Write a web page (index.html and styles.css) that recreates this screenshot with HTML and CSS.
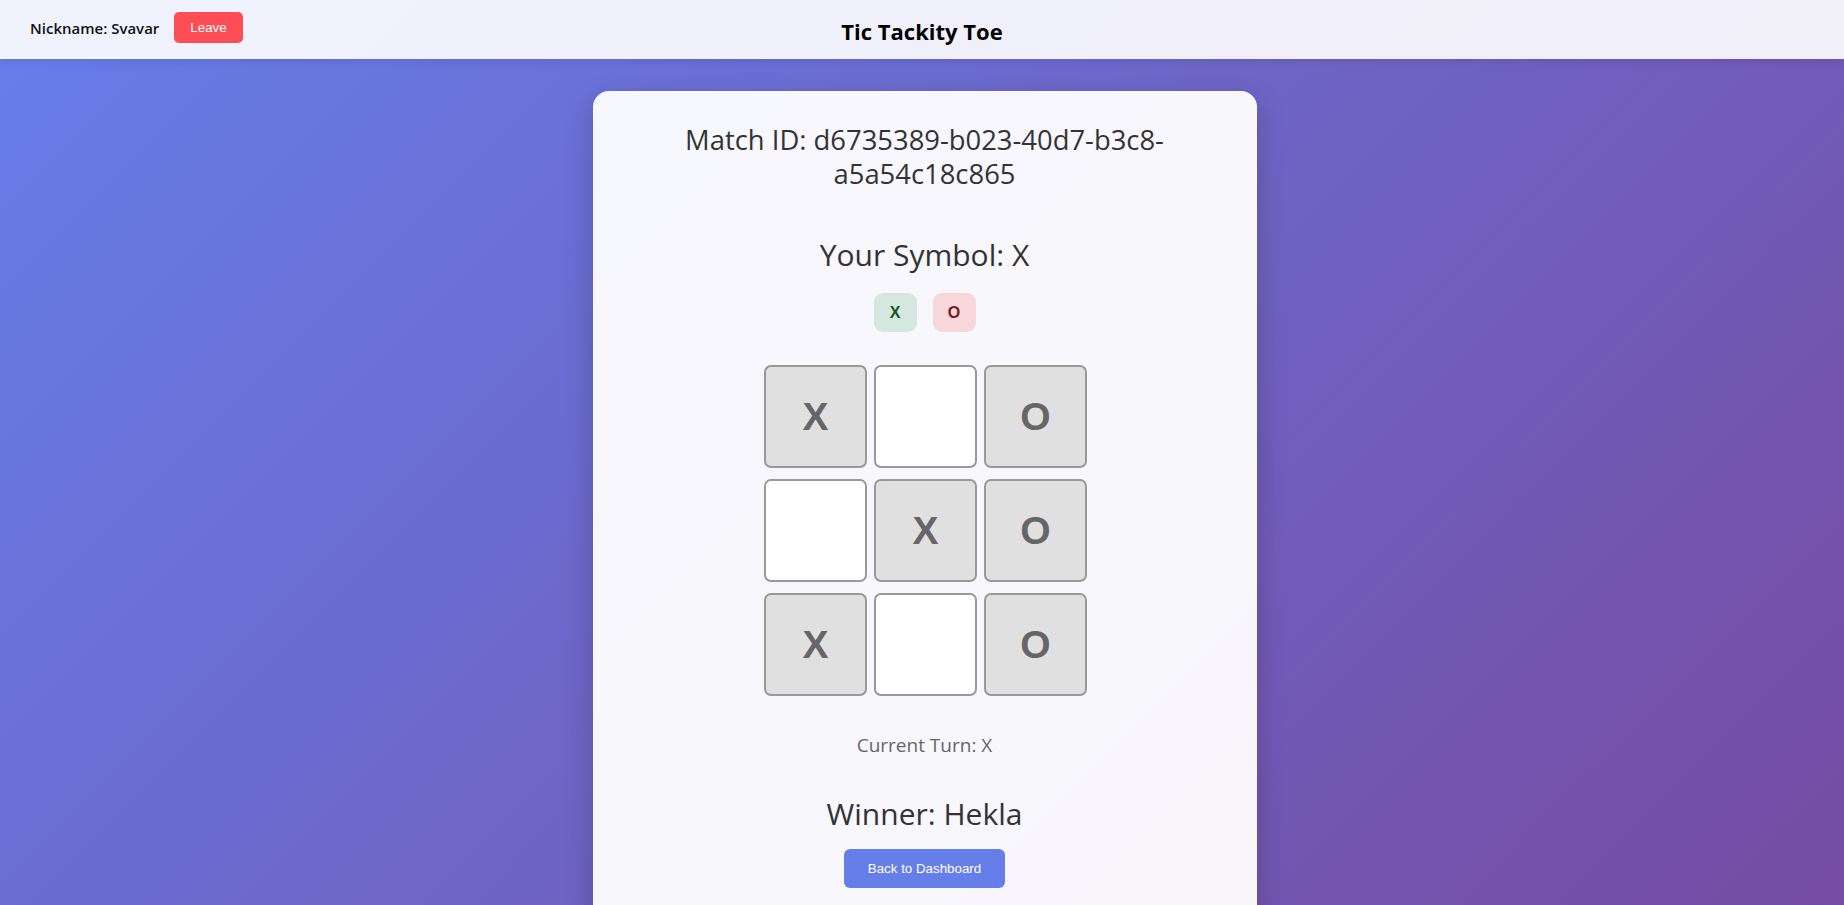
FILE: index.html
```html
<!DOCTYPE html>
<html lang="en">
<head>
<meta charset="utf-8">
<title>Tic Tackity Toe</title>
<link rel="stylesheet" href="styles.css">
</head>
<body>
<header class="topbar">
  <div class="user">
    <span class="nickname">Nickname: Svavar</span>
    <button class="btn-leave">Leave</button>
  </div>
  <h1 class="title">Tic Tackity Toe</h1>
  <div class="spacer"></div>
</header>
<main class="main">
  <section class="card">
    <h2 class="match-id">Match ID: d6735389-b023-40d7-b3c8-a5a54c18c865</h2>
    <h2 class="symbol">Your Symbol: X</h2>
    <div class="badges">
      <span class="badge badge-x">X</span>
      <span class="badge badge-o">O</span>
    </div>
    <div class="board">
      <button class="cell filled">X</button>
      <button class="cell"></button>
      <button class="cell filled">O</button>
      <button class="cell"></button>
      <button class="cell filled">X</button>
      <button class="cell filled">O</button>
      <button class="cell filled">X</button>
      <button class="cell"></button>
      <button class="cell filled">O</button>
    </div>
    <p class="turn">Current Turn: X</p>
    <h2 class="winner">Winner: Hekla</h2>
    <button class="btn-back">Back to Dashboard</button>
  </section>
</main>
</body>
</html>
```
FILE: styles.css
```css
html, body {
  margin: 0;
  padding: 0;
}
body {
  min-height: 100vh;
  font-family: "Open Sans", "Noto Sans", sans-serif;
  background: linear-gradient(135deg, #667eea 0%, #764ba2 100%);
  background-attachment: fixed;
  color: #333;
}
.topbar {
  display: grid;
  grid-template-columns: 1fr auto 1fr;
  align-items: center;
  height: 59px;
  box-sizing: border-box;
  padding: 0 30px;
  background: rgba(255, 255, 255, 0.9);
  box-shadow: 0 2px 10px rgba(0, 0, 0, 0.1);
}
.user {
  display: flex;
  align-items: center;
  gap: 15px;
  margin-top: -4px;
}
.nickname {
  font-size: 15px;
  font-weight: 600;
  color: #111;
}
.btn-leave {
  font-family: "Liberation Sans", Arial, sans-serif;
  font-size: 13.333px;
  background: #ff4d55;
  color: #fff;
  border: none;
  border-radius: 5px;
  padding: 8px 16px;
  height: 31px;
}
.title {
  margin: 3px 0 0;
  font-size: 22px;
  font-weight: 700;
  color: #000;
}
.main {
  padding: 32px 0 0 5px;
}
.card {
  width: 664px;
  box-sizing: border-box;
  margin: 0 auto;
  padding: 32px 32px 40px;
  border-radius: 16px;
  background: rgba(255, 255, 255, 0.95);
  box-shadow: 0 10px 30px rgba(0, 0, 0, 0.2);
  text-align: center;
}
.match-id {
  margin: 0 20px;
  font-size: 27.4px;
  font-weight: 400;
  line-height: 34px;
  color: #333;
}
.symbol {
  margin: 44px 0 0;
  font-size: 30px;
  font-weight: 400;
  line-height: 40px;
  color: #333;
}
.badges {
  display: flex;
  justify-content: center;
  gap: 16px;
  margin-top: 18px;
}
.badge {
  display: flex;
  align-items: center;
  justify-content: center;
  width: 43px;
  height: 39px;
  border-radius: 9px;
  font-family: "Liberation Sans", Arial, sans-serif;
  font-weight: 700;
  font-size: 16px;
}
.badge-x {
  background: #d4e8df;
  color: #155724;
}
.badge-o {
  background: #f8d7da;
  color: #721c24;
}
.board {
  display: grid;
  grid-template-columns: repeat(3, 103px);
  grid-auto-rows: 103px;
  column-gap: 7px;
  row-gap: 11px;
  justify-content: center;
  margin-top: 33px;
  padding-left: 2px;
}
.cell {
  box-sizing: border-box;
  width: 103px;
  height: 103px;
  border: 2px solid #999;
  border-radius: 7px;
  background: #fff;
  font-family: "Liberation Sans", Arial, sans-serif;
  font-size: 39px;
  font-weight: 700;
  color: #666;
  padding: 0;
}
.cell.filled {
  background: #e0e0e0;
}
.turn {
  margin: 37px 0 0;
  font-size: 19px;
  line-height: 24px;
  color: #666;
}
.winner {
  margin: 37px 0 0;
  font-size: 30px;
  font-weight: 400;
  line-height: 40px;
  color: #333;
}
.btn-back {
  margin-top: 15px;
  font-family: "Liberation Sans", Arial, sans-serif;
  font-size: 13.333px;
  background: #667eea;
  color: #fff;
  border: none;
  border-radius: 6px;
  padding: 12px 24px;
  height: 39px;
}
```
